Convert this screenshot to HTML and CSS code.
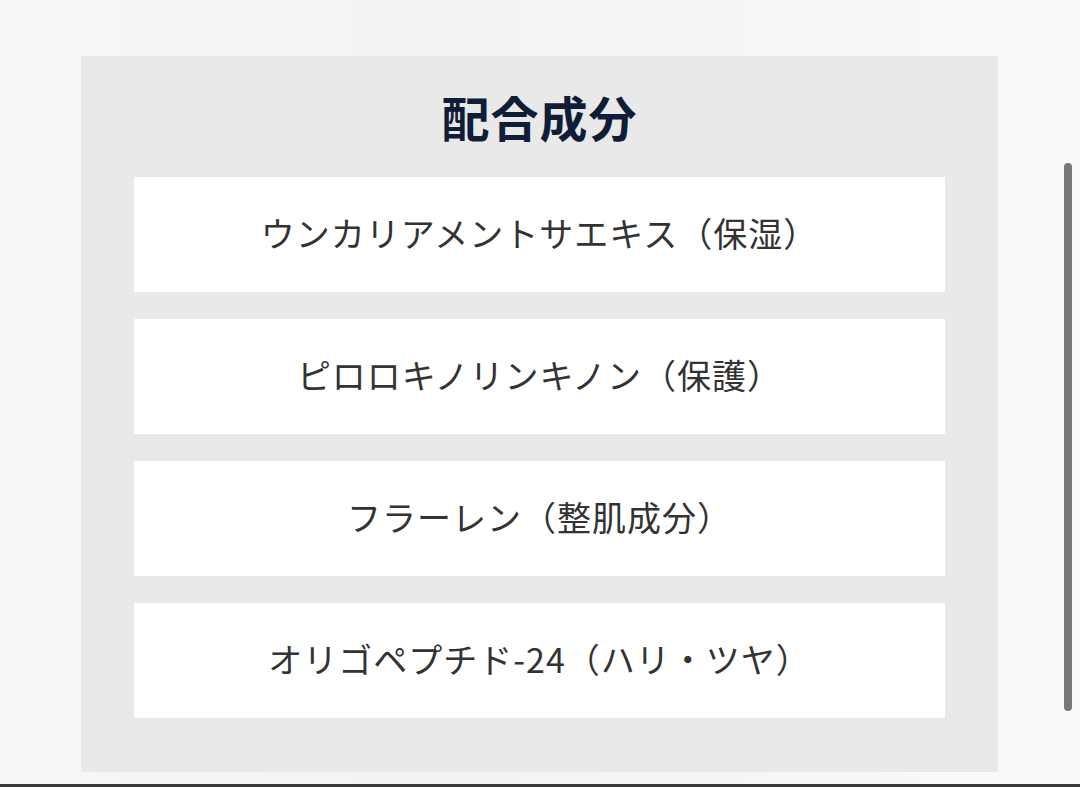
FILE: index.html
```html
<!DOCTYPE html>
<html lang="ja">
<head>
<meta charset="utf-8">
<link rel="stylesheet" href="styles.css">
</head>
<body>
<div class="page">
  <section class="panel">
    <h2 class="title">配合成分</h2>
    <ul class="list">
      <li class="item">ウンカリアメントサエキス（保湿）</li>
      <li class="item">ピロロキノリンキノン（保護）</li>
      <li class="item">フラーレン（整肌成分）</li>
      <li class="item">オリゴペプチド-24（ハリ・ツヤ）</li>
    </ul>
  </section>
  <div class="scrollbar"></div>
</div>
<div class="bottom-line"></div>
</body>
</html>
```
FILE: styles.css
```css
html, body {
  margin: 0;
  padding: 0;
  width: 1080px;
  height: 787px;
  overflow: hidden;
}
body {
  background: linear-gradient(90deg, #f7f7f7 0%, #f3f3f3 40%, #f6f6f6 70%, #fafafa 100%);
  font-family: "Noto Sans CJK JP", "Noto Sans", sans-serif;
  position: relative;
}
.page {
  height: 783px;
  padding-top: 56px;
  padding-left: 81px;
  box-sizing: border-box;
}
.panel {
  width: 917px;
  height: 716px;
  background: #e9e9e9;
  box-sizing: border-box;
  padding: 0 53px;
  display: flex;
  flex-direction: column;
}
.title {
  margin: 0;
  height: 121px;
  display: flex;
  align-items: center;
  justify-content: center;
  font-size: 48px;
  font-weight: 700;
  color: #101d36;
  letter-spacing: 1px;
  padding-bottom: 1px;
  box-sizing: border-box;
}
.list {
  list-style: none;
  margin: 0;
  padding: 0;
  display: flex;
  flex-direction: column;
  gap: 27px;
}
.item {
  height: 115px;
  background: #ffffff;
  display: flex;
  align-items: center;
  justify-content: center;
  font-size: 34px;
  color: #333333;
  letter-spacing: 1px;
  padding-bottom: 5px;
  box-sizing: border-box;
}
.scrollbar {
  position: absolute;
  left: 1064px;
  top: 163px;
  width: 8px;
  height: 548px;
  border-radius: 4px;
  background: #777777;
}
.bottom-line {
  position: absolute;
  left: 0;
  bottom: 0;
  width: 100%;
  height: 3px;
  background: #3a3a3a;
}
```
